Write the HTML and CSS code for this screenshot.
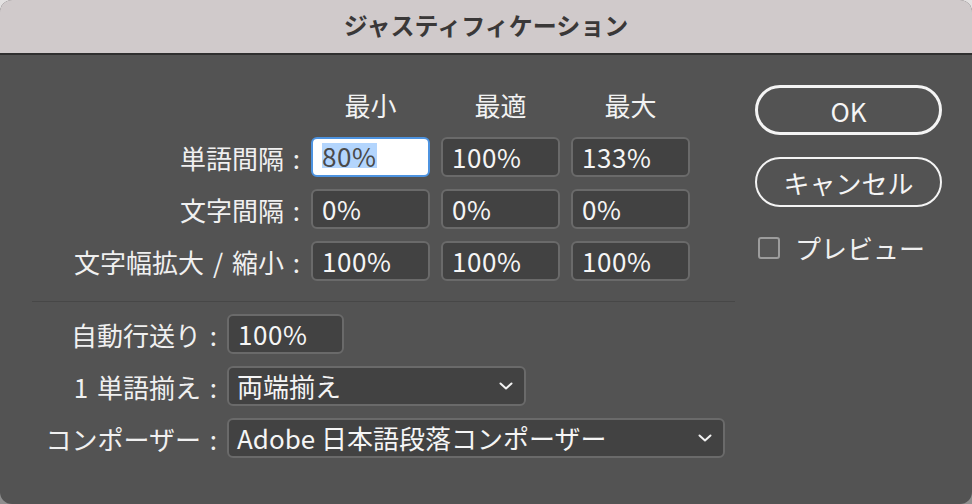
FILE: index.html
```html
<!DOCTYPE html>
<html lang="ja">
<head>
<meta charset="utf-8">
<title>ジャスティフィケーション</title>
<link rel="stylesheet" href="styles.css">
</head>
<body>
<div class="window">
  <div class="titlebar">ジャスティフィケーション</div>
  <div class="content">
    <div class="left">
      <div class="grid3">
        <div></div>
        <div class="colhead">最小</div>
        <div class="colhead">最適</div>
        <div class="colhead">最大</div>

        <div class="label">単語間隔 :</div>
        <div class="field focus"><span class="sel">80%</span></div>
        <div class="field">100%</div>
        <div class="field">133%</div>

        <div class="label">文字間隔 :</div>
        <div class="field">0%</div>
        <div class="field">0%</div>
        <div class="field">0%</div>

        <div class="label">文字幅拡大 / 縮小 :</div>
        <div class="field">100%</div>
        <div class="field">100%</div>
        <div class="field">100%</div>
      </div>
      <div class="divider"></div>
      <div class="grid2">
        <div class="label">自動行送り :</div>
        <div class="field w-small">100%</div>

        <div class="label">1 単語揃え :</div>
        <div class="field select w-mid"><span>両端揃え</span>
          <svg class="chev" width="14" height="8" viewBox="0 0 14 8"><path d="M1.5 1.5 L7 6.5 L12.5 1.5" fill="none" stroke="#f2f2f2" stroke-width="2" stroke-linecap="round" stroke-linejoin="round"/></svg>
        </div>

        <div class="label">コンポーザー :</div>
        <div class="field select w-wide"><span>Adobe 日本語段落コンポーザー</span>
          <svg class="chev" width="14" height="8" viewBox="0 0 14 8"><path d="M1.5 1.5 L7 6.5 L12.5 1.5" fill="none" stroke="#f2f2f2" stroke-width="2" stroke-linecap="round" stroke-linejoin="round"/></svg>
        </div>
      </div>
    </div>
    <div class="right">
      <div class="btn btn-default">OK</div>
      <div class="btn">キャンセル</div>
      <div class="check">
        <span class="box"></span>
        <span class="check-label">プレビュー</span>
      </div>
    </div>
  </div>
</div>
</body>
</html>
```

FILE: styles.css
```css
html, body {
  margin: 0;
  padding: 0;
}
body {
  width: 972px;
  height: 504px;
  background: linear-gradient(#e4e2e2, #8e8e8e);
  font-family: "Noto Sans CJK JP", sans-serif;
  overflow: hidden;
}
.window {
  width: 972px;
  height: 504px;
  border-radius: 12px;
  overflow: hidden;
  background: #535353;
  display: flex;
  flex-direction: column;
}
.titlebar {
  height: 55px;
  box-sizing: border-box;
  flex: none;
  background: #d0cacb;
  border-bottom: 2px solid #2f2f2f;
  color: #3a3838;
  font-size: 24px;
  font-weight: 700;
  display: flex;
  align-items: center;
  justify-content: center;
  line-height: 1;
  padding-bottom: 3px;
}
.content {
  flex: 1;
  display: flex;
}
.left {
  width: 755px;
  flex: none;
  padding-top: 35px;
}
.grid3 {
  display: grid;
  grid-template-columns: 300px 119px 119px 119px;
  grid-template-rows: 35px 40px 40px 40px;
  column-gap: 11px;
  row-gap: 12px;
}
.colhead {
  align-self: start;
  text-align: center;
  color: #f2f2f2;
  font-size: 26px;
  line-height: 30px;
}
.label {
  display: flex;
  align-items: center;
  justify-content: flex-end;
  color: #f0f0f0;
  font-size: 26px;
  white-space: pre;
  word-spacing: 3px;
}
.field {
  box-sizing: border-box;
  height: 40px;
  background: #424242;
  border: 2px solid #6a6a6a;
  border-radius: 6px;
  color: #f5f5f5;
  font-size: 26px;
  line-height: 36px;
  padding-left: 9px;
  white-space: nowrap;
  letter-spacing: 0.6px;
}
.field.focus {
  background: #ffffff;
  border: 2px solid #4d93e0;
  color: #4a4a4a;
}
.sel {
  background: #b3d5fd;
  display: inline-block;
  line-height: 25px;
  vertical-align: 1px;
}
.divider {
  margin: 20px 20px 12px 32px;
  height: 1px;
  background: #474747;
}
.grid2 {
  display: grid;
  grid-template-columns: 217px auto;
  grid-auto-rows: 40px;
  column-gap: 10px;
  row-gap: 12px;
  justify-items: start;
}
.grid2 .label {
  justify-self: stretch;
}
.w-small { width: 117px; }
.w-mid { width: 299px; }
.w-wide { width: 498px; }
.select {
  display: flex;
  align-items: center;
  justify-content: space-between;
  padding-left: 8px;
  padding-right: 11px;
  letter-spacing: 0;
}
.chev {
  flex: none;
}
.right {
  width: 187px;
  padding-top: 30px;
  display: flex;
  flex-direction: column;
}
.btn {
  box-sizing: border-box;
  height: 50px;
  border: 2px solid #f4f4f4;
  border-radius: 25px;
  color: #f5f5f5;
  font-size: 26px;
  display: flex;
  align-items: center;
  justify-content: center;
  margin-bottom: 22px;
}
.btn-default {
  border-width: 3px;
}
.check {
  margin-top: 8px;
  display: flex;
  align-items: center;
  gap: 15px;
  padding-left: 3px;
}
.box {
  box-sizing: border-box;
  width: 22px;
  height: 22px;
  border: 2px solid #9c9c9c;
  border-radius: 3px;
  background: #575757;
}
.check-label {
  color: #f0f0f0;
  font-size: 26px;
  line-height: 22px;
}
```
